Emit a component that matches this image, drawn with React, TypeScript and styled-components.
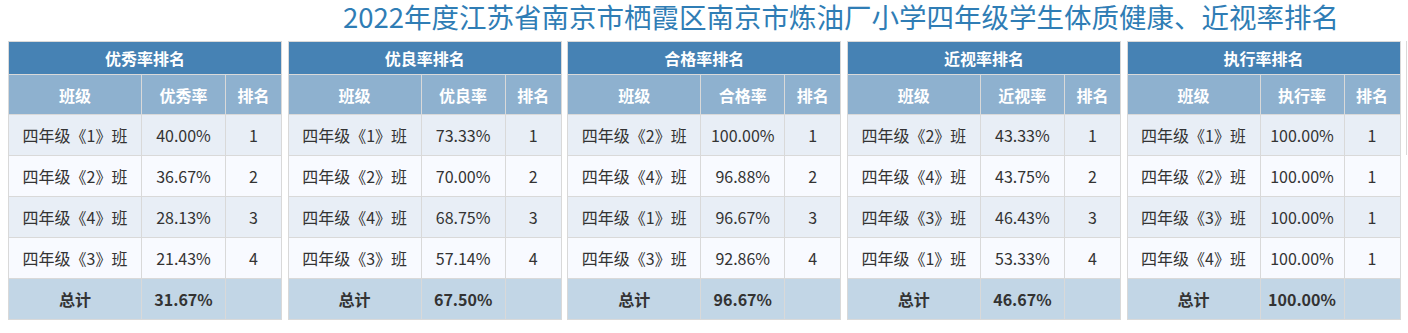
import React from "react";
import styled, { createGlobalStyle } from "styled-components";

const Global = createGlobalStyle`
  html, body { margin: 0; padding: 0; background: #ffffff; }
  body { font-family: "Noto Sans CJK SC", "Noto Sans", sans-serif; overflow: hidden; }
`;

const Page = styled.div`
  width: 1408px;
  padding-left: 8px;
  box-sizing: border-box;
  overflow: hidden;
`;

const Title = styled.h1`
  margin: 0;
  height: 41px;
  line-height: 32px;
  padding-left: 266px;
  font-size: 27.5px;
  font-weight: normal;
  color: #2f7db5;
  text-align: center;
  white-space: nowrap;
`;

const Row = styled.div`
  display: flex;
  gap: 5.6px;
  align-items: flex-start;
`;

const Table = styled.table`
  width: 274px;
  flex: 0 0 274px;
  border-collapse: collapse;
  table-layout: fixed;
  border: 1px solid #d9d9d9;
  font-size: 16px;
  color: #333;
`;

const Caption = styled.th`
  background: #4682b4;
  color: #fff;
  font-weight: bold;
  font-size: 16px;
  height: 32px;
  padding: 0;
  border: 1px solid #d9d9d9;
`;

const HeadCell = styled.th`
  background: #8eb1cf;
  color: #fff;
  font-weight: bold;
  font-size: 16px;
  height: 39px;
  padding: 0;
  border: 1px solid #d9d9d9;
`;

const Cell = styled.td<{ $odd: boolean }>`
  background: ${(p) => (p.$odd ? "#e8eef6" : "#f8faff")};
  height: 40px;
  padding: 0;
  text-align: center;
  white-space: nowrap;
  border: 1px solid #d9d9d9;
`;

const TotalCell = styled.td`
  background: #c2d6e6;
  height: 40px;
  padding: 0;
  text-align: center;
  font-weight: bold;
  border: 1px solid #d9d9d9;
`;

const Stub = styled.div`
  flex: 0 0 274px;
  height: 114px;
  border-left: 1px solid #d9d9d9;
`;

type Data = {
  name: string;
  rows: [string, string, string][];
  total: string;
};

const tables: Data[] = [
  {
    name: "优秀率",
    rows: [
      ["1", "40.00%", "1"],
      ["2", "36.67%", "2"],
      ["4", "28.13%", "3"],
      ["3", "21.43%", "4"],
    ],
    total: "31.67%",
  },
  {
    name: "优良率",
    rows: [
      ["1", "73.33%", "1"],
      ["2", "70.00%", "2"],
      ["4", "68.75%", "3"],
      ["3", "57.14%", "4"],
    ],
    total: "67.50%",
  },
  {
    name: "合格率",
    rows: [
      ["2", "100.00%", "1"],
      ["4", "96.88%", "2"],
      ["1", "96.67%", "3"],
      ["3", "92.86%", "4"],
    ],
    total: "96.67%",
  },
  {
    name: "近视率",
    rows: [
      ["2", "43.33%", "1"],
      ["4", "43.75%", "2"],
      ["3", "46.43%", "3"],
      ["1", "53.33%", "4"],
    ],
    total: "46.67%",
  },
  {
    name: "执行率",
    rows: [
      ["1", "100.00%", "1"],
      ["2", "100.00%", "1"],
      ["3", "100.00%", "1"],
      ["4", "100.00%", "1"],
    ],
    total: "100.00%",
  },
];

function RankTable({ d }: { d: Data }) {
  return (
    <Table>
      <colgroup>
        <col style={{ width: 133 }} />
        <col style={{ width: 84 }} />
        <col style={{ width: 56 }} />
      </colgroup>
      <thead>
        <tr>
          <Caption colSpan={3}>{d.name}排名</Caption>
        </tr>
        <tr>
          <HeadCell>班级</HeadCell>
          <HeadCell>{d.name}</HeadCell>
          <HeadCell>排名</HeadCell>
        </tr>
      </thead>
      <tbody>
        {d.rows.map((r, i) => (
          <tr key={i}>
            <Cell $odd={i % 2 === 0}>四年级《{r[0]}》班</Cell>
            <Cell $odd={i % 2 === 0}>{r[1]}</Cell>
            <Cell $odd={i % 2 === 0}>{r[2]}</Cell>
          </tr>
        ))}
        <tr>
          <TotalCell>总计</TotalCell>
          <TotalCell>{d.total}</TotalCell>
          <TotalCell></TotalCell>
        </tr>
      </tbody>
    </Table>
  );
}

export default function App() {
  return (
    <Page>
      <Global />
      <Title>2022年度江苏省南京市栖霞区南京市炼油厂小学四年级学生体质健康、近视率排名</Title>
      <Row>
        {tables.map((t) => (
          <RankTable key={t.name} d={t} />
        ))}
        <Stub />
      </Row>
    </Page>
  );
}
